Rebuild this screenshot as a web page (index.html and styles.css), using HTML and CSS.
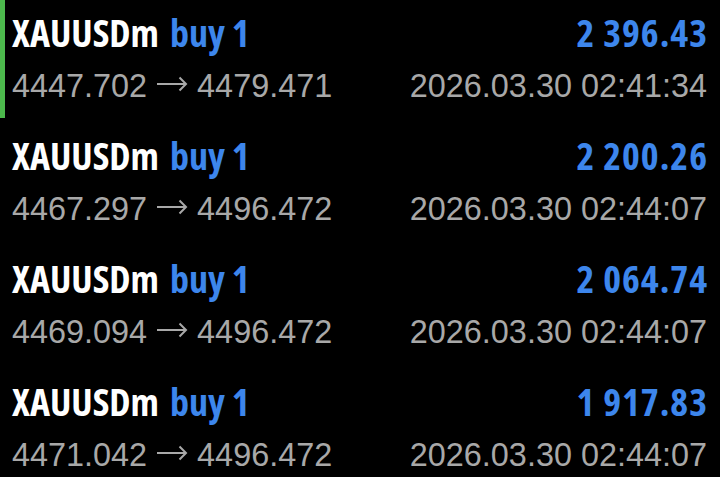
FILE: index.html
```html
<!DOCTYPE html>
<html>
<head>
<meta charset="utf-8">
<link rel="stylesheet" href="styles.css">
</head>
<body>
<div class="list">
  <div class="row selected">
    <div class="line top">
      <span class="sym">XAUUSDm<span class="side">buy 1</span></span>
      <span class="profit">2 396.43</span>
    </div>
    <div class="line sub">
      <span>4447.702 <svg class="arrow" viewBox="0 0 32 16" width="32" height="16"><path d="M1 8H30M23.5 1.5L30 8L23.5 14.5"/></svg> 4479.471</span>
      <span>2026.03.30 02:41:34</span>
    </div>
  </div>
  <div class="row">
    <div class="line top">
      <span class="sym">XAUUSDm<span class="side">buy 1</span></span>
      <span class="profit">2 200.26</span>
    </div>
    <div class="line sub">
      <span>4467.297 <svg class="arrow" viewBox="0 0 32 16" width="32" height="16"><path d="M1 8H30M23.5 1.5L30 8L23.5 14.5"/></svg> 4496.472</span>
      <span>2026.03.30 02:44:07</span>
    </div>
  </div>
  <div class="row">
    <div class="line top">
      <span class="sym">XAUUSDm<span class="side">buy 1</span></span>
      <span class="profit">2 064.74</span>
    </div>
    <div class="line sub">
      <span>4469.094 <svg class="arrow" viewBox="0 0 32 16" width="32" height="16"><path d="M1 8H30M23.5 1.5L30 8L23.5 14.5"/></svg> 4496.472</span>
      <span>2026.03.30 02:44:07</span>
    </div>
  </div>
  <div class="row">
    <div class="line top">
      <span class="sym">XAUUSDm<span class="side">buy 1</span></span>
      <span class="profit">1 917.83</span>
    </div>
    <div class="line sub">
      <span>4471.042 <svg class="arrow" viewBox="0 0 32 16" width="32" height="16"><path d="M1 8H30M23.5 1.5L30 8L23.5 14.5"/></svg> 4496.472</span>
      <span>2026.03.30 02:44:07</span>
    </div>
  </div>
</div>
</body>
</html>
```
FILE: styles.css
```css
html, body {
  margin: 0;
  padding: 0;
  background: #000;
  overflow: hidden;
}
.list {
  display: flex;
  flex-direction: column;
  gap: 5px;
}
.row {
  height: 118px;
  box-sizing: border-box;
  padding: 10px 13px 0 12px;
  border-left: 5px solid transparent;
  margin-left: -5px;
}
.row.selected {
  border-left-color: #4cb84c;
  margin-left: 0;
  padding-left: 7px;
}
.line {
  display: flex;
  justify-content: space-between;
  white-space: nowrap;
}
.top {
  font-family: "Open Sans", sans-serif;
  font-weight: 700;
  font-stretch: 75%;
  font-size: 38px;
  line-height: 44px;
  color: #fff;
}
.side {
  margin-left: 11px;
}
.side, .profit {
  color: #3d86ec;
}
.profit {
  letter-spacing: 1px;
  margin-right: -1px;
}
.sub {
  margin-top: 12px;
  font-family: "Liberation Sans", Arial, sans-serif;
  font-size: 32.4px;
  line-height: 40px;
  color: #a8a8a8;
}
.arrow {
  vertical-align: 5px;
  fill: none;
  stroke: #a8a8a8;
  stroke-width: 2;
}
```
